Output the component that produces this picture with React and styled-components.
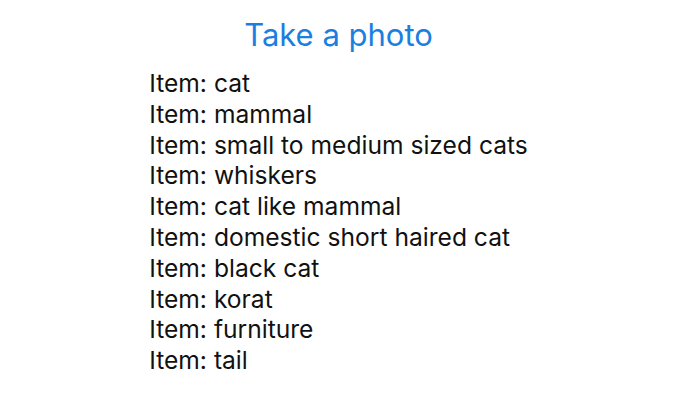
import React from 'react';
import styled, { createGlobalStyle } from 'styled-components';

const Global = createGlobalStyle`
  html, body {
    margin: 0;
    padding: 0;
    background: #ffffff;
  }
  body {
    font-family: Inter, "Liberation Sans", sans-serif;
  }
`;

const Screen = styled.div`
  width: 677px;
  height: 407px;
  display: flex;
  flex-direction: column;
  align-items: center;
  padding-top: 15px;
  box-sizing: border-box;
`;

const PhotoButton = styled.button`
  border: none;
  background: none;
  padding: 0;
  font-family: inherit;
  font-size: 31px;
  line-height: 40px;
  color: #1b7fe0;
  cursor: pointer;
`;

const ItemList = styled.ul`
  list-style: none;
  margin: 13px 0 0;
  padding: 0;
`;

const Item = styled.li`
  font-size: 24.6px;
  line-height: 30.8px;
  color: #111111;
`;

const items = [
  'cat',
  'mammal',
  'small to medium sized cats',
  'whiskers',
  'cat like mammal',
  'domestic short haired cat',
  'black cat',
  'korat',
  'furniture',
  'tail',
];

export default function App() {
  return (
    <>
      <Global />
      <Screen>
        <PhotoButton>Take a photo</PhotoButton>
        <ItemList>
          {items.map((name) => (
            <Item key={name}>Item: {name}</Item>
          ))}
        </ItemList>
      </Screen>
    </>
  );
}
